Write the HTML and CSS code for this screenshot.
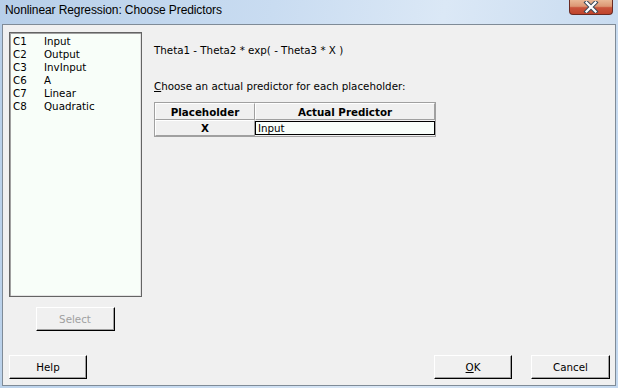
FILE: index.html
```html
<!DOCTYPE html>
<html>
<head>
<meta charset="utf-8">
<link rel="stylesheet" href="styles.css">
</head>
<body>
<div class="window">
  <div class="titlebar">
    <span class="title">Nonlinear Regression: Choose Predictors</span>
    <div class="close">
      <svg width="18" height="12" viewBox="0 0 18 12"><path d="M4.5 1.5 L13.5 10.5 M13.5 1.5 L4.5 10.5" stroke="#3a4a5a" stroke-width="4.2" stroke-linecap="square"/><path d="M4.5 1.5 L13.5 10.5 M13.5 1.5 L4.5 10.5" stroke="#ffffff" stroke-width="2.2" stroke-linecap="square"/></svg>
    </div>
  </div>
  <div class="client">
    <div class="main">
      <div class="leftcol">
        <div class="listbox">
          <div class="row"><span class="cnum">C1</span><span>Input</span></div>
          <div class="row"><span class="cnum">C2</span><span>Output</span></div>
          <div class="row"><span class="cnum">C3</span><span>InvInput</span></div>
          <div class="row"><span class="cnum">C6</span><span>A</span></div>
          <div class="row"><span class="cnum">C7</span><span>Linear</span></div>
          <div class="row"><span class="cnum">C8</span><span>Quadratic</span></div>
        </div>
        <div class="btn select disabled">Select</div>
      </div>
      <div class="rightcol">
        <div class="formula">Theta1 - Theta2 * exp( - Theta3 * X )</div>
        <div class="prompt"><u>C</u>hoose an actual predictor for each placeholder:</div>
        <div class="grid">
          <div class="hcell c1">Placeholder</div>
          <div class="hcell c2">Actual Predictor</div>
          <div class="hcell c1 bold">X</div>
          <div class="inputcell"><div class="input">Input</div></div>
        </div>
      </div>
    </div>
    <div class="bottom">
      <div class="btn help">Help</div>
      <div class="spacer"></div>
      <div class="btn ok"><u>O</u>K</div>
      <div class="btn cancel">Cancel</div>
    </div>
  </div>
</div>
</body>
</html>
```
FILE: styles.css
```css
* { box-sizing: border-box; }
html, body { margin: 0; padding: 0; }
body { width: 618px; height: 388px; overflow: hidden; background: #c4d9ef; }
.window {
  width: 618px; height: 388px;
  background: linear-gradient(100deg, #b7cfe9 0%, #c9dcf1 40%, #dbe8f6 65%, #c2d7ee 100%);
  display: flex; flex-direction: column;
  padding: 0 2px 2px 2px;
}
.titlebar {
  height: 24px; position: relative;
  display: flex; align-items: flex-start;
}
.title {
  font-family: "Liberation Sans", Arial, sans-serif;
  font-size: 12px; color: #000;
  margin-left: 3px; margin-top: 3px;
  letter-spacing: -0.1px;
}
.close {
  position: absolute; left: 567px; top: 0;
  width: 44px; height: 15px;
  border: 1px solid #6a2a22; border-top: none;
  border-radius: 0 0 4px 4px;
  background: linear-gradient(#e9b896 0%, #dc9774 45%, #c9553c 55%, #c0442c 100%);
  display: flex; align-items: center; justify-content: center;
}
.client {
  flex: 1;
  background: #f0f0f0;
  border: 1px solid #7f8b97;
  display: flex; flex-direction: column;
  padding: 7px 5px 6px 6px;
  font-family: "DejaVu Sans", Verdana, sans-serif;
  font-size: 10.3px; color: #000;
}
.main { display: flex; gap: 12px; }
.leftcol { width: 133px; display: flex; flex-direction: column; align-items: center; }
.listbox {
  width: 133px; height: 265px;
  background: #f8fef9;
  border: 1px solid #646464;
  box-shadow: inset 1px 1px 0 #a0a0a0, inset -1px -1px 0 #e3e3e3;
  padding: 2px 3px;
}
.row { height: 13px; line-height: 13px; display: flex; }
.cnum { width: 31px; }
.btn {
  height: 24px;
  background: #f0f0f0;
  border-top: 1px solid #ffffff; border-left: 1px solid #ffffff;
  border-right: 1px solid #000; border-bottom: 1px solid #000;
  box-shadow: inset -1px -1px 0 #a0a0a0;
  display: flex; align-items: center; justify-content: center;
}
.select { width: 79px; height: 24px; margin-top: 10px; margin-left: -1px; }
.disabled { color: #a0a0a0; }
.rightcol { flex: 1; padding-top: 12px; }
.formula { height: 13px; line-height: 13px; }
.prompt { margin-top: 23px; height: 13px; line-height: 13px; }
.grid {
  margin-top: 9px;
  width: 282px;
  display: grid;
  grid-template-columns: 100px 180px;
  grid-template-rows: 17px 16px;
  border: 1px solid #a0a0a0;
  background: #f0f0f0;
}
.hcell {
  border-top: 1px solid #fff; border-left: 1px solid #fff;
  border-right: 1px solid #a0a0a0; border-bottom: 1px solid #a0a0a0;
  display: flex; align-items: center; justify-content: center;
  font-weight: bold; color: #000;
}
.inputcell { padding: 1px 0 1px 0; }
.input {
  height: 14px; border: 1px solid #000;
  background: #f8fefa;
  line-height: 12px; padding-left: 2px;
}
.bottom { margin-top: auto; display: flex; gap: 19px; align-items: flex-end; }
.spacer { flex: 1; }
.help { width: 78px; margin-right: -19px; }
.ok { width: 78px; }
.cancel { width: 79px; }
```
